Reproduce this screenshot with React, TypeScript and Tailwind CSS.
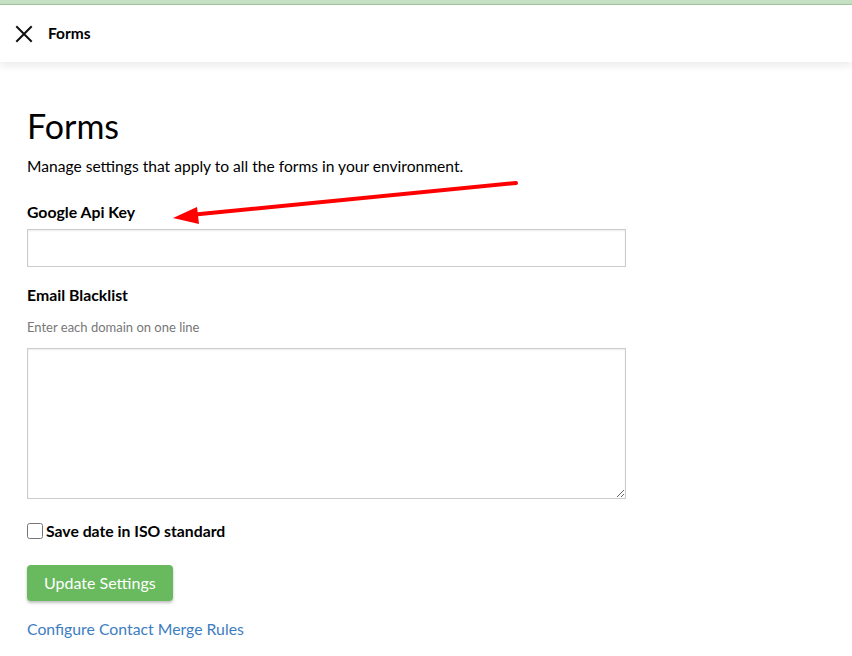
import { useState } from "react";

function CloseIcon() {
  return (
    <svg width="18" height="18" viewBox="0 0 18 18" aria-hidden="true">
      <path d="M2 2 L16 16 M16 2 L2 16" stroke="#111" strokeWidth="2" strokeLinecap="square" />
    </svg>
  );
}

// red annotation arrow drawn over the page
function Arrow() {
  return (
    <svg
      className="pointer-events-none absolute left-0 top-0"
      width="852"
      height="656"
      viewBox="0 0 852 656"
      aria-hidden="true"
    >
      <path d="M516 183 L190 215" stroke="#ff0000" strokeWidth="4" strokeLinecap="round" />
      <path d="M173 218 L197 207 L199 224 Z" fill="#ff0000" />
    </svg>
  );
}

export default function App() {
  const [apiKey, setApiKey] = useState("");
  const [blacklist, setBlacklist] = useState("");
  const [iso, setIso] = useState(false);

  return (
    <div
      className="relative min-h-[656px] bg-white text-black"
      style={{ fontFamily: "Lato, 'Open Sans', sans-serif" }}
    >
      <div className="h-[4px] bg-[#c6e0c3]" />
      <div className="h-px bg-[#a4c3a1]" />
      <header className="relative z-10 flex h-[57px] items-center bg-white px-[15px] shadow-[0_4px_8px_rgba(0,0,0,0.08)]">
        <button type="button" aria-label="Close" className="flex h-[18px] w-[18px] items-center justify-center">
          <CloseIcon />
        </button>
        <h2 className="ml-[15px] text-[15.5px] font-bold">Forms</h2>
      </header>

      <main className="px-[27px] pt-[42px]">
        <h1 className="text-[34px] leading-[44px] font-normal">Forms</h1>
        <p className="mt-[8px] text-[15.6px] leading-[20px]">
          Manage settings that apply to all the forms in your environment.
        </p>

        <label className="mt-[26px] block text-[15.8px] leading-[20px] font-bold">Google Api Key</label>
        <input
          value={apiKey}
          onChange={(e) => setApiKey(e.target.value)}
          className="mt-[7px] block h-[38px] w-[599px] border border-[#cccccc] px-3 text-[15px] shadow-[inset_0_1px_2px_rgba(0,0,0,0.08)] outline-none"
        />

        <label className="mt-[18px] block text-[15.8px] leading-[20px] font-bold">Email Blacklist</label>
        <p className="mt-[14px] text-[13px] leading-[16px] text-[#777777]">Enter each domain on one line</p>
        <textarea
          value={blacklist}
          onChange={(e) => setBlacklist(e.target.value)}
          className="mt-[13px] block h-[151px] w-[599px] border border-[#cccccc] px-3 py-2 text-[15px] shadow-[inset_0_1px_2px_rgba(0,0,0,0.08)] outline-none"
        />

        <label className="mt-[22px] flex items-center gap-[3px] text-[15.75px] leading-[20px] font-bold">
          <input
            type="checkbox"
            checked={iso}
            onChange={(e) => setIso(e.target.checked)}
            className="m-0 h-[16px] w-[16px]"
          />
          Save date in ISO standard
        </label>

        <button
          type="button"
          className="mt-[24px] block h-[36px] rounded-[4px] bg-[#69b95e] px-[17px] text-[16px] text-white shadow-[0_2px_3px_rgba(0,0,0,0.25)]"
        >
          Update Settings
        </button>

        <a href="#" className="mt-[18px] block w-fit text-[15.8px] leading-[20px] text-[#3d7dbf]">
          Configure Contact Merge Rules
        </a>
      </main>

      <Arrow />
    </div>
  );
}
